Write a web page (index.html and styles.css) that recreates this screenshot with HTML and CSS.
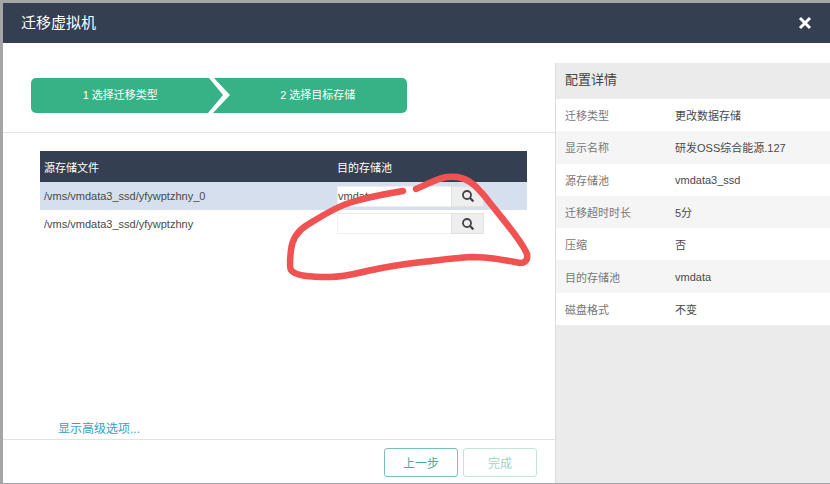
FILE: index.html
```html
<!DOCTYPE html>
<html lang="zh-CN">
<head>
  <meta charset="UTF-8" />
  <title>迁移虚拟机</title>
  <link rel="stylesheet" href="styles.css">
</head>
<body>
  <div class="modal">
    <div class="modal-head">
      <h2>迁移虚拟机</h2>
      <svg class="close" width="14" height="14" viewBox="0 0 14 14">
        <path d="M2 2 L12 12 M12 2 L2 12" stroke="#fff" stroke-width="3" fill="none" />
      </svg>
    </div>

    <div class="modal-body">
      <div class="main">
        <div class="steps-wrap">
          <div class="steps">
            <span class="step">1 选择迁移类型</span>
            <svg class="chevron" width="19" height="35" viewBox="0 0 19 35">
              <path d="M-1 0 L13 17 L-2 35 L3 35 L20 17 L4 0 Z" fill="#fff" />
            </svg>
            <span class="step">2 选择目标存储</span>
          </div>
        </div>

        <table class="files">
          <thead>
            <tr><th class="col-src">源存储文件</th><th>目的存储池</th></tr>
          </thead>
          <tbody>
            <tr class="selected">
              <td>/vms/vmdata3_ssd/yfywptzhny_0</td>
              <td>
                <div class="picker">
                  <input type="text" value="vmdata" />
                  <button class="search">
                    <svg width="14" height="14" viewBox="0 0 14 14">
                      <circle cx="6" cy="6" r="4" stroke="#444" stroke-width="1.8" fill="none" />
                      <path d="M9 9 L12.4 12.4" stroke="#444" stroke-width="2.2" />
                    </svg>
                  </button>
                </div>
              </td>
            </tr>
            <tr class="plain">
              <td>/vms/vmdata3_ssd/yfywptzhny</td>
              <td>
                <div class="picker">
                  <input type="text" />
                  <button class="search">
                    <svg width="14" height="14" viewBox="0 0 14 14">
                      <circle cx="6" cy="6" r="4" stroke="#444" stroke-width="1.8" fill="none" />
                      <path d="M9 9 L12.4 12.4" stroke="#444" stroke-width="2.2" />
                    </svg>
                  </button>
                </div>
              </td>
            </tr>
          </tbody>
        </table>

        <a class="advanced" href="#">显示高级选项...</a>

        <div class="modal-foot">
          <button class="bt">上一步</button>
          <button class="bt bt-off">完成</button>
        </div>
      </div>

      <div class="details">
        <h3>配置详情</h3>
        <div class="row"><span class="key">迁移类型</span><span>更改数据存储</span></div>
        <div class="row alt"><span class="key">显示名称</span><span>研发OSS综合能源.127</span></div>
        <div class="row"><span class="key">源存储池</span><span>vmdata3_ssd</span></div>
        <div class="row alt"><span class="key">迁移超时时长</span><span>5分</span></div>
        <div class="row"><span class="key">压缩</span><span>否</span></div>
        <div class="row alt"><span class="key">目的存储池</span><span>vmdata</span></div>
        <div class="row"><span class="key">磁盘格式</span><span>不变</span></div>
      </div>
    </div>

    <!-- hand drawn circle on top of the screenshot -->
    <svg class="scribble" width="830" height="484" viewBox="0 0 830 484">
      <path d="M403 191 C385 194 372 196 352 202 C335 207 322 216 307 225 C296 232 292 240 291 250 C290 258 289 266 291 270 C295 276 310 277 330 277 C345 277 358 273 372 270 C390 266 405 264 422 262 C440 260 455 258 472 257 C490 257 505 260 520 263 C526 263 528 259 527 254 C524 247 520 242 516 236 C508 225 498 213 490 203 C484 195 478 187 470 182 C463 177 455 176 447 177 C438 178 428 184 416 189" />
    </svg>
  </div>
</body>
</html>
```

FILE: styles.css
```css
* {
  box-sizing: border-box;
}

body {
  margin: 0;
  height: 484px;
  overflow: hidden;
  padding: 3px 0 1px 3px;
  background: #a4a5a6;
  font-family: "Liberation Sans", "Noto Sans CJK SC", sans-serif;
  font-size: 11px;
  color: #4a4a4a;
}

.modal {
  height: 480px;
  background: #fff;
  display: flex;
  flex-direction: column;
}

.scribble {
  position: absolute;
  left: 0;
  top: 0;
  pointer-events: none;
}

.scribble path {
  fill: none;
  stroke: #f05252;
  stroke-width: 6.5;
  stroke-linecap: round;
  stroke-linejoin: round;
}

.modal-head {
  height: 40px;
  flex: none;
  background: #343f52;
  color: #fff;
  display: flex;
  align-items: center;
  justify-content: space-between;
  padding: 0 18px;
}

.modal-head h2 {
  margin: 0 0 3px;
  font-size: 15px;
  font-weight: normal;
}

.modal-body {
  flex: 1;
  display: flex;
  min-height: 0;
}

.main {
  width: 552px;
  display: flex;
  flex-direction: column;
}

.steps-wrap {
  padding: 35px 148px 19px 28px;
  border-bottom: 1px solid #e2e2e2;
}

.steps {
  height: 35px;
  display: flex;
  background: #35b387;
  border-radius: 5px;
  color: #fff;
}

.step {
  flex: 1;
  text-align: center;
  line-height: 34px;
}

.chevron {
  flex: none;
  overflow: visible;
}

.files {
  width: 487px;
  margin: 18px 0 0 37px;
  border-collapse: collapse;
  table-layout: fixed;
}

.files th {
  height: 31px;
  background: #343f52;
  color: #fff;
  font-weight: normal;
  text-align: left;
  padding: 0;
}

.files th.col-src,
.files td:first-child {
  width: 297px;
  padding-left: 4px;
}

.files td {
  height: 28px;
  padding: 0;
}

.selected {
  background: #d6dfee;
}

.plain .picker {
  margin-top: -1px;
}

.picker {
  display: flex;
  width: 147px;
  height: 21px;
}

input {
  width: 114px;
  height: 21px;
  border: 1px solid #eee;
  border-right: none;
  padding: 0;
  font: inherit;
  color: #4a4a4a;
  background: #fff;
  outline: none;
}

.search {
  width: 33px;
  height: 21px;
  padding: 0;
  border: 1px solid #e2e2e2;
  background: #eee;
  display: flex;
  align-items: center;
  justify-content: center;
}

.advanced {
  margin: auto 0 3px 55px;
  font-size: 12px;
  color: #3b9fb8;
  text-decoration: none;
}

.modal-foot {
  height: 44px;
  flex: none;
  border-top: 1px solid #e2e2e2;
  padding: 8px 18px 0 0;
  display: flex;
  justify-content: flex-end;
  align-items: flex-start;
  gap: 5px;
}

.bt {
  width: 74px;
  height: 29px;
  padding: 0;
  background: #fff;
  border: 1px solid #7cc0b4;
  border-radius: 3px;
  color: #4fa998;
  font: inherit;
  font-size: 12px;
}

.bt-off {
  border-color: #c5e3dd;
  color: #9fd3c8;
}

.details {
  flex: 1;
  margin-top: 20px;
  background: #ebebeb;
  border-left: 1px solid #dcdcdc;
}

.details h3 {
  margin: 0;
  height: 36px;
  line-height: 34px;
  padding-left: 9px;
  font-size: 13px;
  font-weight: normal;
  color: #444;
}

.row {
  height: 32.3px;
  background: #fff;
  display: flex;
  align-items: center;
  padding-left: 9px;
}

.row.alt {
  background: #f5f5f5;
}

.key {
  width: 110px;
  color: #777;
}
```
